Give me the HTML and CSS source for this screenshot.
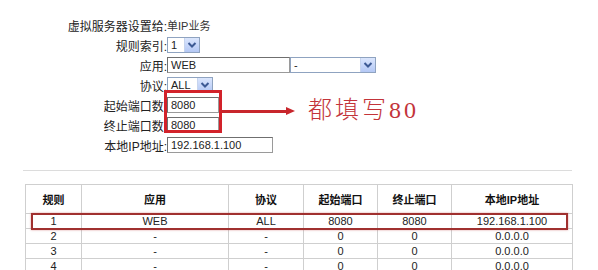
FILE: index.html
```html
<!DOCTYPE html>
<html lang="zh-CN">

<head>
    <meta charset="UTF-8">
    <title>虚拟服务器</title>
    <link rel="stylesheet" href="styles.css">
</head>

<body>
    <div class="page">
        <div class="form">
            <div class="label">虚拟服务器设置给:</div>
            <div class="value">单IP业务</div>

            <div class="label">规则索引:</div>
            <div class="value">
                <span class="select sel-index"><span class="sel-text">1</span><span class="sel-btn"><svg width="10" height="8" viewBox="0 0 10 8"><polyline points="1.5,2 5,5.5 8.5,2" /></svg></span></span>
            </div>

            <div class="label">应用:</div>
            <div class="value">
                <span class="input in-app">WEB</span><span class="select sel-app"><span class="sel-text">-</span><span class="sel-btn"><svg width="10" height="8" viewBox="0 0 10 8"><polyline points="1.5,2 5,5.5 8.5,2" /></svg></span></span>
            </div>

            <div class="label">协议:</div>
            <div class="value">
                <span class="select sel-proto"><span class="sel-text">ALL</span><span class="sel-btn"><svg width="10" height="8" viewBox="0 0 10 8"><polyline points="1.5,2 5,5.5 8.5,2" /></svg></span></span>
            </div>

            <div class="label">起始端口数:</div>
            <div class="value"><span class="input in-port">8080</span></div>

            <div class="label">终止端口数:</div>
            <div class="value"><span class="input in-port">8080</span></div>

            <div class="label">本地IP地址:</div>
            <div class="value"><span class="input in-ip">192.168.1.100</span></div>
        </div>

        <div class="divider"></div>

        <div class="table-wrap">
            <table class="rules">
                <thead>
                    <tr>
                        <th class="c-id">规则</th>
                        <th class="c-app">应用</th>
                        <th class="c-proto">协议</th>
                        <th class="c-port">起始端口</th>
                        <th class="c-port">终止端口</th>
                        <th>本地IP地址</th>
                    </tr>
                </thead>
                <tbody>
                    <tr><td>1</td><td>WEB</td><td>ALL</td><td>8080</td><td>8080</td><td>192.168.1.100</td></tr>
                    <tr><td>2</td><td>-</td><td>-</td><td>0</td><td>0</td><td>0.0.0.0</td></tr>
                    <tr><td>3</td><td>-</td><td>-</td><td>0</td><td>0</td><td>0.0.0.0</td></tr>
                    <tr><td>4</td><td>-</td><td>-</td><td>0</td><td>0</td><td>0.0.0.0</td></tr>
                </tbody>
            </table>
            <div class="row-mark"></div>
        </div>

        <!-- annotation drawn over the form -->
        <div class="port-mark"></div>
        <div class="arrow"><span class="arrow-line"></span><span class="arrow-head"></span></div>
        <div class="note">都填写80</div>
    </div>
</body>

</html>
```

FILE: styles.css
```css
body {
    margin: 0;
    background: #fff;
    font-family: 'Liberation Sans', 'Noto Sans CJK SC', sans-serif;
    font-size: 12px;
    color: #333;
}

.page {
    position: relative;
    width: 598px;
    height: 270px;
    overflow: hidden;
}

/* form */

.form {
    display: grid;
    grid-template-columns: 167px 1fr;
    grid-auto-rows: 20px;
    align-items: center;
    padding-top: 15px;
}

.label {
    text-align: right;
    white-space: nowrap;
    color: #222;
}

.value {
    display: flex;
    align-items: center;
    white-space: nowrap;
    font-size: 11px;
}

.input,
.select {
    display: inline-flex;
    align-items: center;
    box-sizing: border-box;
    height: 16px;
    border: 1px solid #9a9a9a;
    background: #fff;
    font-size: 11px;
    color: #222;
}

.input {
    padding-left: 3px;
    border-top-color: #6f6f6f;
    border-left-color: #6f6f6f;
}

.select {
    border-color: #8fa3c0;
}

.sel-text {
    flex: 1;
    padding-left: 3px;
}

.sel-btn {
    display: flex;
    align-items: center;
    justify-content: center;
    width: 14px;
    height: 14px;
    background: linear-gradient(#dbe6fd, #b4c8f5);
    border-left: 1px solid #c6d4ee;
}

.sel-btn polyline {
    fill: none;
    stroke: #3d5a94;
    stroke-width: 2;
}

.sel-index {
    width: 33px;
}

.in-app {
    width: 123px;
}

.sel-app {
    width: 86px;
}

.sel-proto {
    width: 46px;
}

.in-port {
    width: 52px;
}

.in-ip {
    width: 106px;
}

/* list */

.divider {
    margin: 15px 26px 0 23px;
    height: 1px;
    background: #dcdcdc;
}

.table-wrap {
    position: relative;
    margin: 13px 0 0 25px;
}

.rules {
    border-collapse: collapse;
    width: 548px;
    font-size: 11px;
    table-layout: fixed;
}

.rules th,
.rules td {
    border: 1px solid #cfcfcf;
    text-align: center;
    padding: 0;
}

.rules th {
    height: 28px;
    font-weight: bold;
    color: #111;
}

.rules td {
    height: 14px;
    line-height: 14px;
    color: #222;
}

.c-id {
    width: 55px;
}

.c-app {
    width: 146px;
}

.c-proto {
    width: 74px;
}

.c-port {
    width: 73px;
}

.row-mark {
    position: absolute;
    left: 6px;
    top: 29px;
    width: 537px;
    height: 17px;
    box-sizing: border-box;
    border: 2px solid #a0302f;
    box-shadow: 0 0 2px rgba(200, 90, 90, 0.6);
}

/* annotation */

.port-mark {
    position: absolute;
    left: 164px;
    top: 90px;
    width: 58px;
    height: 43px;
    box-sizing: border-box;
    border: 3px solid #d2222a;
}

.arrow {
    position: absolute;
    left: 222px;
    top: 107px;
    display: flex;
    align-items: center;
}

.arrow-line {
    width: 64px;
    height: 3px;
    background: #c8262c;
}

.arrow-head {
    width: 0;
    height: 0;
    border-top: 4px solid transparent;
    border-bottom: 4px solid transparent;
    border-left: 9px solid #c8262c;
}

.note {
    position: absolute;
    left: 308px;
    top: 96px;
    font-family: 'Liberation Serif', 'Noto Sans CJK SC', serif;
    font-size: 24px;
    font-weight: 300;
    letter-spacing: 3px;
    color: #c3343a;
    line-height: 28px;
}
```
